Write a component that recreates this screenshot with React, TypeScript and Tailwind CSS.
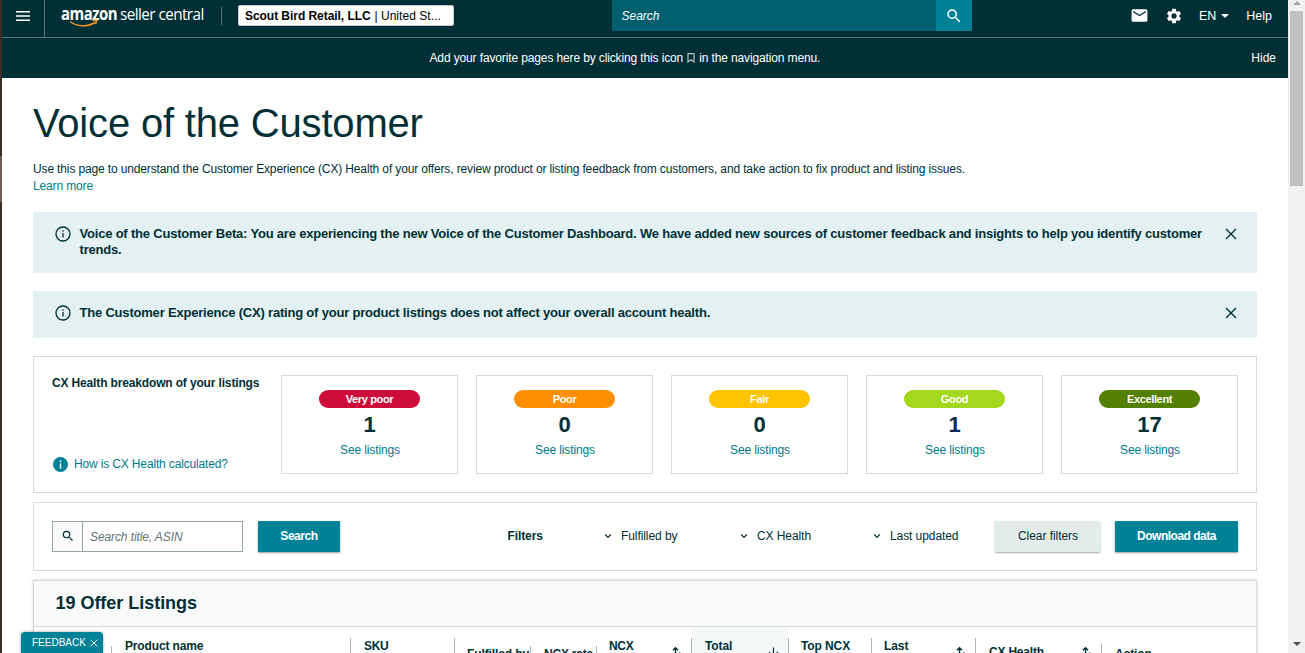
//Utils
import clsx from "clsx";

//Icons
import { MdEmail, MdSearch, MdSettings } from "react-icons/md";

const ratings = [
    { label: "Very poor", count: 1, color: "bg-[#cc0c39]" },
    { label: "Poor", count: 0, color: "bg-[#ff8f00]" },
    { label: "Fair", count: 0, color: "bg-[#ffc400]" },
    { label: "Good", count: 1, color: "bg-[#a3d81c]" },
    { label: "Excellent", count: 17, color: "bg-[#538000]" },
];

const filters = [
    { label: "Fulfilled by", width: "w-[136px]" },
    { label: "CX Health", width: "w-[133px]" },
    { label: "Last updated", width: "w-[122px]" },
];

const columns = [
    { label: "Product name", cell: "pl-[13px] pt-[11px]", divider: "mt-[11px]", text: "tracking-[-0.15px]" },
    { label: "SKU", cell: "pl-[13px] pt-[11px]", divider: "mt-[11px]", text: "tracking-[-0.3px]" },
    { label: "Fulfilled by", cell: "pl-[12px] pt-[19px]", divider: "mt-[19px]", text: "tracking-[-0.1px]" },
    { label: "NCX rate", cell: "pl-[13px] pt-[19px]", divider: "mt-[19px]", text: "tracking-[-0.2px]" },
    { label: "NCX", cell: "pl-[12px] pt-[11px]", divider: "mt-[11px]", text: "tracking-[-0.3px]", sort: "both" },
    { label: "Total", cell: "pl-[13px] pt-[11px] bg-[#f4f8f9]", divider: "mt-[11px]", text: "tracking-[-0.1px]", sort: "down" },
    { label: "Top NCX", cell: "pl-[12px] pt-[11px]", divider: "mt-[11px]", text: "tracking-[-0.1px]" },
    { label: "Last", cell: "pl-[12px] pt-[11px]", divider: "mt-[11px]", text: "tracking-[-0.1px]", sort: "both" },
    { label: "CX Health", cell: "pl-[13px] pt-[17px]", divider: "mt-[17px]", text: "tracking-[-0.2px]", sort: "both-high" },
    { label: "Action", cell: "pl-[13px] pt-[19px]", divider: "", text: "tracking-[-0.1px]" },
];

const CloseIcon = ({ className }: { className: string }) => (
    <svg viewBox="0 0 12 12" className={className} fill="none" stroke="currentColor" strokeWidth="1.4">
        <path d="M1 1l10 10M11 1L1 11" />
    </svg>
);

const InfoIcon = () => (
    <svg viewBox="0 0 16 16" className="size-4 shrink-0" fill="none" stroke="currentColor" strokeWidth="1.3">
        <circle cx="8" cy="8" r="7" />
        <path d="M8 7v4.600M8 4.200v1.500" />
    </svg>
);

const SortIcon = ({ type }: { type: string }) => (
    <svg
        viewBox="0 0 12 14"
        className={clsx("w-3 h-3.5 shrink-0", type === "both" && "mt-[8px] mr-[8px]", type === "both-high" && "mt-[2px] mr-[8px]", type === "down" && "mt-[9px] mr-[9px]")}
        fill="none"
        stroke="currentColor"
        strokeWidth="1.4"
    >
        {type === "down" ? (
            <path d="M6.500 .5V9.500M2 5L6.500 9.500L11 5" strokeWidth="1.2" />
        ) : (
            <path d="M4.500 10V1.800M2 4.300L4.500 1.800L7 4.300M9 6.500V12M6.800 10l2.200 2.200L11.200 10" />
        )}
    </svg>
);

const Header = () => (
    <header className="bg-[#002f36] h-[78px] text-white">
        <div className="flex border-[#5c7478] border-b h-[38px]">
            <div className="flex justify-center border-[#5c7478] border-r w-[43px] shrink-0">
                <svg viewBox="0 0 14 10" className="mt-[11px] w-3.5 h-2.5" fill="currentColor">
                    <path d="M0 0h14v1.500H0zM0 4.200h14v1.500H0zM0 8.500h14V10H0z" />
                </svg>
            </div>
            <div className="relative flex items-start pt-[3px] pl-4 w-[176px] font-['Open_Sans'] text-[17px] leading-[22px] shrink-0">
                <span className="w-[59px] font-bold tracking-[-0.6px] origin-left scale-x-[0.88]">amazon</span>
                <span className="tracking-[-0.6px] whitespace-nowrap origin-left scale-x-[0.895]">seller central</span>
                <svg viewBox="0 0 30 8" className="top-[19px] left-[24px] absolute w-[30px] h-2" fill="none" stroke="#f19221" strokeWidth="1.5">
                    <path d="M1 2.500C8 8 19 8 26 3.500M23.500 1.500l4.500-.2l-1.500 4" />
                </svg>
            </div>
            <div className="bg-[#5c7478] mt-[7px] w-px h-[18px]"></div>
            <div className="bg-white mt-[5px] ml-4 pl-[6px] border border-[#c5cccd] rounded-[2px] w-[216px] h-[21px] text-[12px] text-black leading-[20px] whitespace-nowrap">
                <span className="inline-block w-[126px] font-bold tracking-[-0.05px]">Scout Bird Retail, LLC</span>
                <span className="tracking-[0.05px]"> | United St...</span>
            </div>
            <div className="flex bg-[#005f6e] ml-[158px] w-[360px] h-[31px]">
                <span className="flex-1 pl-[9.5px] text-[12px] italic leading-[32px]">Search</span>
                <div className="flex justify-center items-center bg-[#008296] w-9">
                    <MdSearch className="size-[18px]" />
                </div>
            </div>
            <div className="flex flex-1 justify-end items-start pr-4 text-[12.5px] leading-[32px]">
                <MdEmail className="mt-[6px] size-[19px]" />
                <MdSettings className="mt-[7px] ml-[16px] size-[18px]" />
                <span className="ml-4">EN</span>
                <svg viewBox="0 0 8 4" className="mt-[14px] ml-[5px] w-2 h-1" fill="currentColor">
                    <path d="M0 0h8L4 4z" />
                </svg>
                <span className="ml-[17px]">Help</span>
            </div>
        </div>
        <div className="flex pr-3 h-10 text-[12px] leading-10">
            <div className="flex flex-1 items-center pl-[427.5px] whitespace-nowrap">
                <span className="tracking-[-0.13px]">Add your favorite pages here by clicking this icon</span>
                <svg viewBox="0 0 8 10" className="mx-1 w-2 h-2.5" fill="none" stroke="#b5c2c4" strokeWidth="1.2">
                    <path d="M1 .6h6v8.400L4 6.800L1 9z" />
                </svg>
                <span className="tracking-[-0.13px]">in the navigation menu.</span>
            </div>
            <span>Hide</span>
        </div>
    </header>
);

const Alert = ({ className, children }: { className: string; children: React.ReactNode }) => (
    <div className={clsx("flex items-start bg-[#e3f1f3] pt-[14px] pr-5 pl-[22px]", className)}>
        <InfoIcon />
        <p className="flex-1 ml-[8.5px] font-bold text-[13px] leading-4 tracking-[-0.2px]">{children}</p>
        <CloseIcon className="mt-[2px] size-3" />
    </div>
);

const Chevron = () => (
    <svg viewBox="0 0 8 6" className="w-2 h-1.5" fill="none" stroke="currentColor" strokeWidth="1.2">
        <path d="M1.200 1.500L4 4.300l2.800-2.800" />
    </svg>
);

const App = () => {
    return (
        <div className="relative flex bg-white w-[1305px] h-[653px] overflow-hidden font-['Liberation_Sans',sans-serif] text-[#002f36]">
            <div className="bg-[#3b2d28] pt-[156px] w-0.5 shrink-0">
                <div className="bg-[#6b5c56] h-[46px]"></div>
            </div>

            <div className="w-[1286px] shrink-0">
                <Header />

                <main className="px-[31px]">
                    <h1 className="pt-[22px] h-[83px] text-[40px] leading-[46px] tracking-[-0.18px]">Voice of the Customer</h1>
                    <p className="h-[51px] text-[12px] leading-[17px] tracking-[-0.138px] whitespace-nowrap">
                        Use this page to understand the Customer Experience (CX) Health of your offers, review product or listing feedback from customers, and take action to fix product and listing issues.
                        <br />
                        <a className="text-[#007a8c]">Learn more</a>
                    </p>

                    <Alert className="h-[61px]">
                        Voice of the Customer Beta: You are experiencing the new Voice of the Customer Dashboard. We have added new sources of customer feedback and insights to help you identify customer trends.
                    </Alert>
                    <Alert className="mt-[18px] h-[47px]">
                        The Customer Experience (CX) rating of your product listings does not affect your overall account health.
                    </Alert>

                    {/* CX Health breakdown */}
                    <section className="flex mt-[18px] py-[18px] pl-[18px] border border-[#d5dbdb] h-[137px]">
                        <div className="flex flex-col justify-between w-[229px] text-[12px] leading-4 tracking-[-0.15px]">
                            <h2 className="font-bold whitespace-nowrap">CX Health breakdown of your listings</h2>
                            <a className="flex items-center gap-1.5 pb-[2px] pl-px text-[#007a8c] whitespace-nowrap">
                                <svg viewBox="0 0 15 15" className="mt-px size-[15px]">
                                    <circle cx="7.500" cy="7.500" r="7.500" fill="#008296" />
                                    <path d="M7.500 6.500v5M7.500 3.500v1.700" stroke="white" strokeWidth="1.500" />
                                </svg>
                                How is CX Health calculated?
                            </a>
                        </div>
                        <div className="flex gap-[18px]">
                            {ratings.map((rating) => (
                                <div key={rating.label} className="flex flex-col items-center pt-[14px] border border-[#d5dbdb] w-[177px] h-[99px]">
                                    <span className={clsx("rounded-full w-[101px] h-[18px] font-bold text-[11px] text-center text-white leading-[18px] tracking-[-0.35px]", rating.color)}>
                                        {rating.label}
                                    </span>
                                    <span className="mt-[5px] font-bold text-[22px] leading-6">{rating.count}</span>
                                    <a className="mt-[5px] pl-px text-[#007a8c] text-[12px] leading-4 tracking-[-0.12px]">See listings</a>
                                </div>
                            ))}
                        </div>
                    </section>

                    {/* Search and filters */}
                    <section className="flex items-start mt-[9px] pt-[18px] pl-[18px] border border-[#d5dbdb] h-[69px] text-[12px]">
                        <div className="flex border border-[#95a5a6] w-[191px] h-[31px]">
                            <div className="flex justify-center items-center bg-[#fafafa] pb-0.5 border-[#95a5a6] border-r w-[30px]">
                                <MdSearch className="size-[14px]" />
                            </div>
                            <span className="pl-[7px] text-[#5f7377] italic leading-[30px] tracking-[-0.1px]">Search title, ASIN</span>
                        </div>
                        <button className="bg-[#008296] shadow-[0_1px_2px_rgba(0,0,0,0.4)] ml-[15px] pb-px rounded-[1px] w-[82px] h-[31px] font-bold text-white tracking-[-0.45px]">Search</button>
                        <span className="ml-[167.5px] w-[96.5px] font-bold leading-[30px] tracking-[-0.1px]">Filters</span>
                        {filters.map((filter) => (
                            <div key={filter.label} className={clsx("flex items-center gap-[9px] h-[30px] tracking-[-0.08px] whitespace-nowrap", filter.width)}>
                                <Chevron />
                                {filter.label}
                            </div>
                        ))}
                        <button className="bg-[#e3ebeb] shadow-[0_1px_2px_rgba(0,0,0,0.35)] pb-px pl-px rounded-[1px] w-[105px] h-[31px] tracking-[-0.05px]">Clear filters</button>
                        <button className="bg-[#008296] shadow-[0_1px_2px_rgba(0,0,0,0.4)] ml-[15px] pb-px rounded-[1px] w-[123px] h-[31px] font-bold text-white tracking-[-0.5px]">Download data</button>
                    </section>

                    {/* Listings table */}
                    <section className="shadow-[0_0_3px_rgba(0,0,0,0.2)] mt-[9px] border border-[#d5dbdb] h-[120px]">
                        <h2 className="bg-[#fafafa] pl-[21.5px] border-[#d5dbdb] border-b h-[46px] font-bold text-[18px] leading-[44px] tracking-[-0.03px]">19 Offer Listings</h2>
                        <div className="grid grid-cols-[78px_239px_104px_76px_66px_95px_97px_83px_104px_126px_1fr] h-[72px] font-bold text-[12px] leading-4">
                            <div className="flex justify-end">
                                <div className="bg-[#aab7b8] mt-[19px] w-px"></div>
                            </div>
                            {columns.map((column) => (
                                <div key={column.label} className="flex">
                                    <div className={clsx("flex flex-1 justify-between whitespace-nowrap", column.cell)}>
                                        <span className={column.text}>{column.label}</span>
                                        {column.sort && <SortIcon type={column.sort} />}
                                    </div>
                                    {column.divider && <div className={clsx("bg-[#aab7b8] w-px", column.divider)}></div>}
                                </div>
                            ))}
                        </div>
                    </section>
                </main>
            </div>

            {/* Page scrollbar */}
            <div className="flex flex-col items-center bg-[#f1f1f1] w-[17px]">
                <svg viewBox="0 0 8 4" className="mt-[1px] w-2 h-1 text-[#a3a3a3]" fill="currentColor">
                    <path d="M0 4h8L4 0z" />
                </svg>
                <div className="bg-[#c1c1c1] mt-[6px] w-[13px] h-[175px]"></div>
                <svg viewBox="0 0 8 4" className="mt-auto mb-[7px] w-2 h-1 text-[#505050]" fill="currentColor">
                    <path d="M0 0h8L4 4z" />
                </svg>
            </div>

            <button className="bottom-0 left-[21px] absolute flex items-center gap-1 bg-[#008296] shadow-[0_0_3px_rgba(0,0,0,0.4)] pl-[11px] rounded-t-[4px] w-[82px] h-[21px] text-[10px] text-white">
                FEEDBACK
                <CloseIcon className="size-[8px]" />
            </button>
        </div>
    );
};

export default App;
